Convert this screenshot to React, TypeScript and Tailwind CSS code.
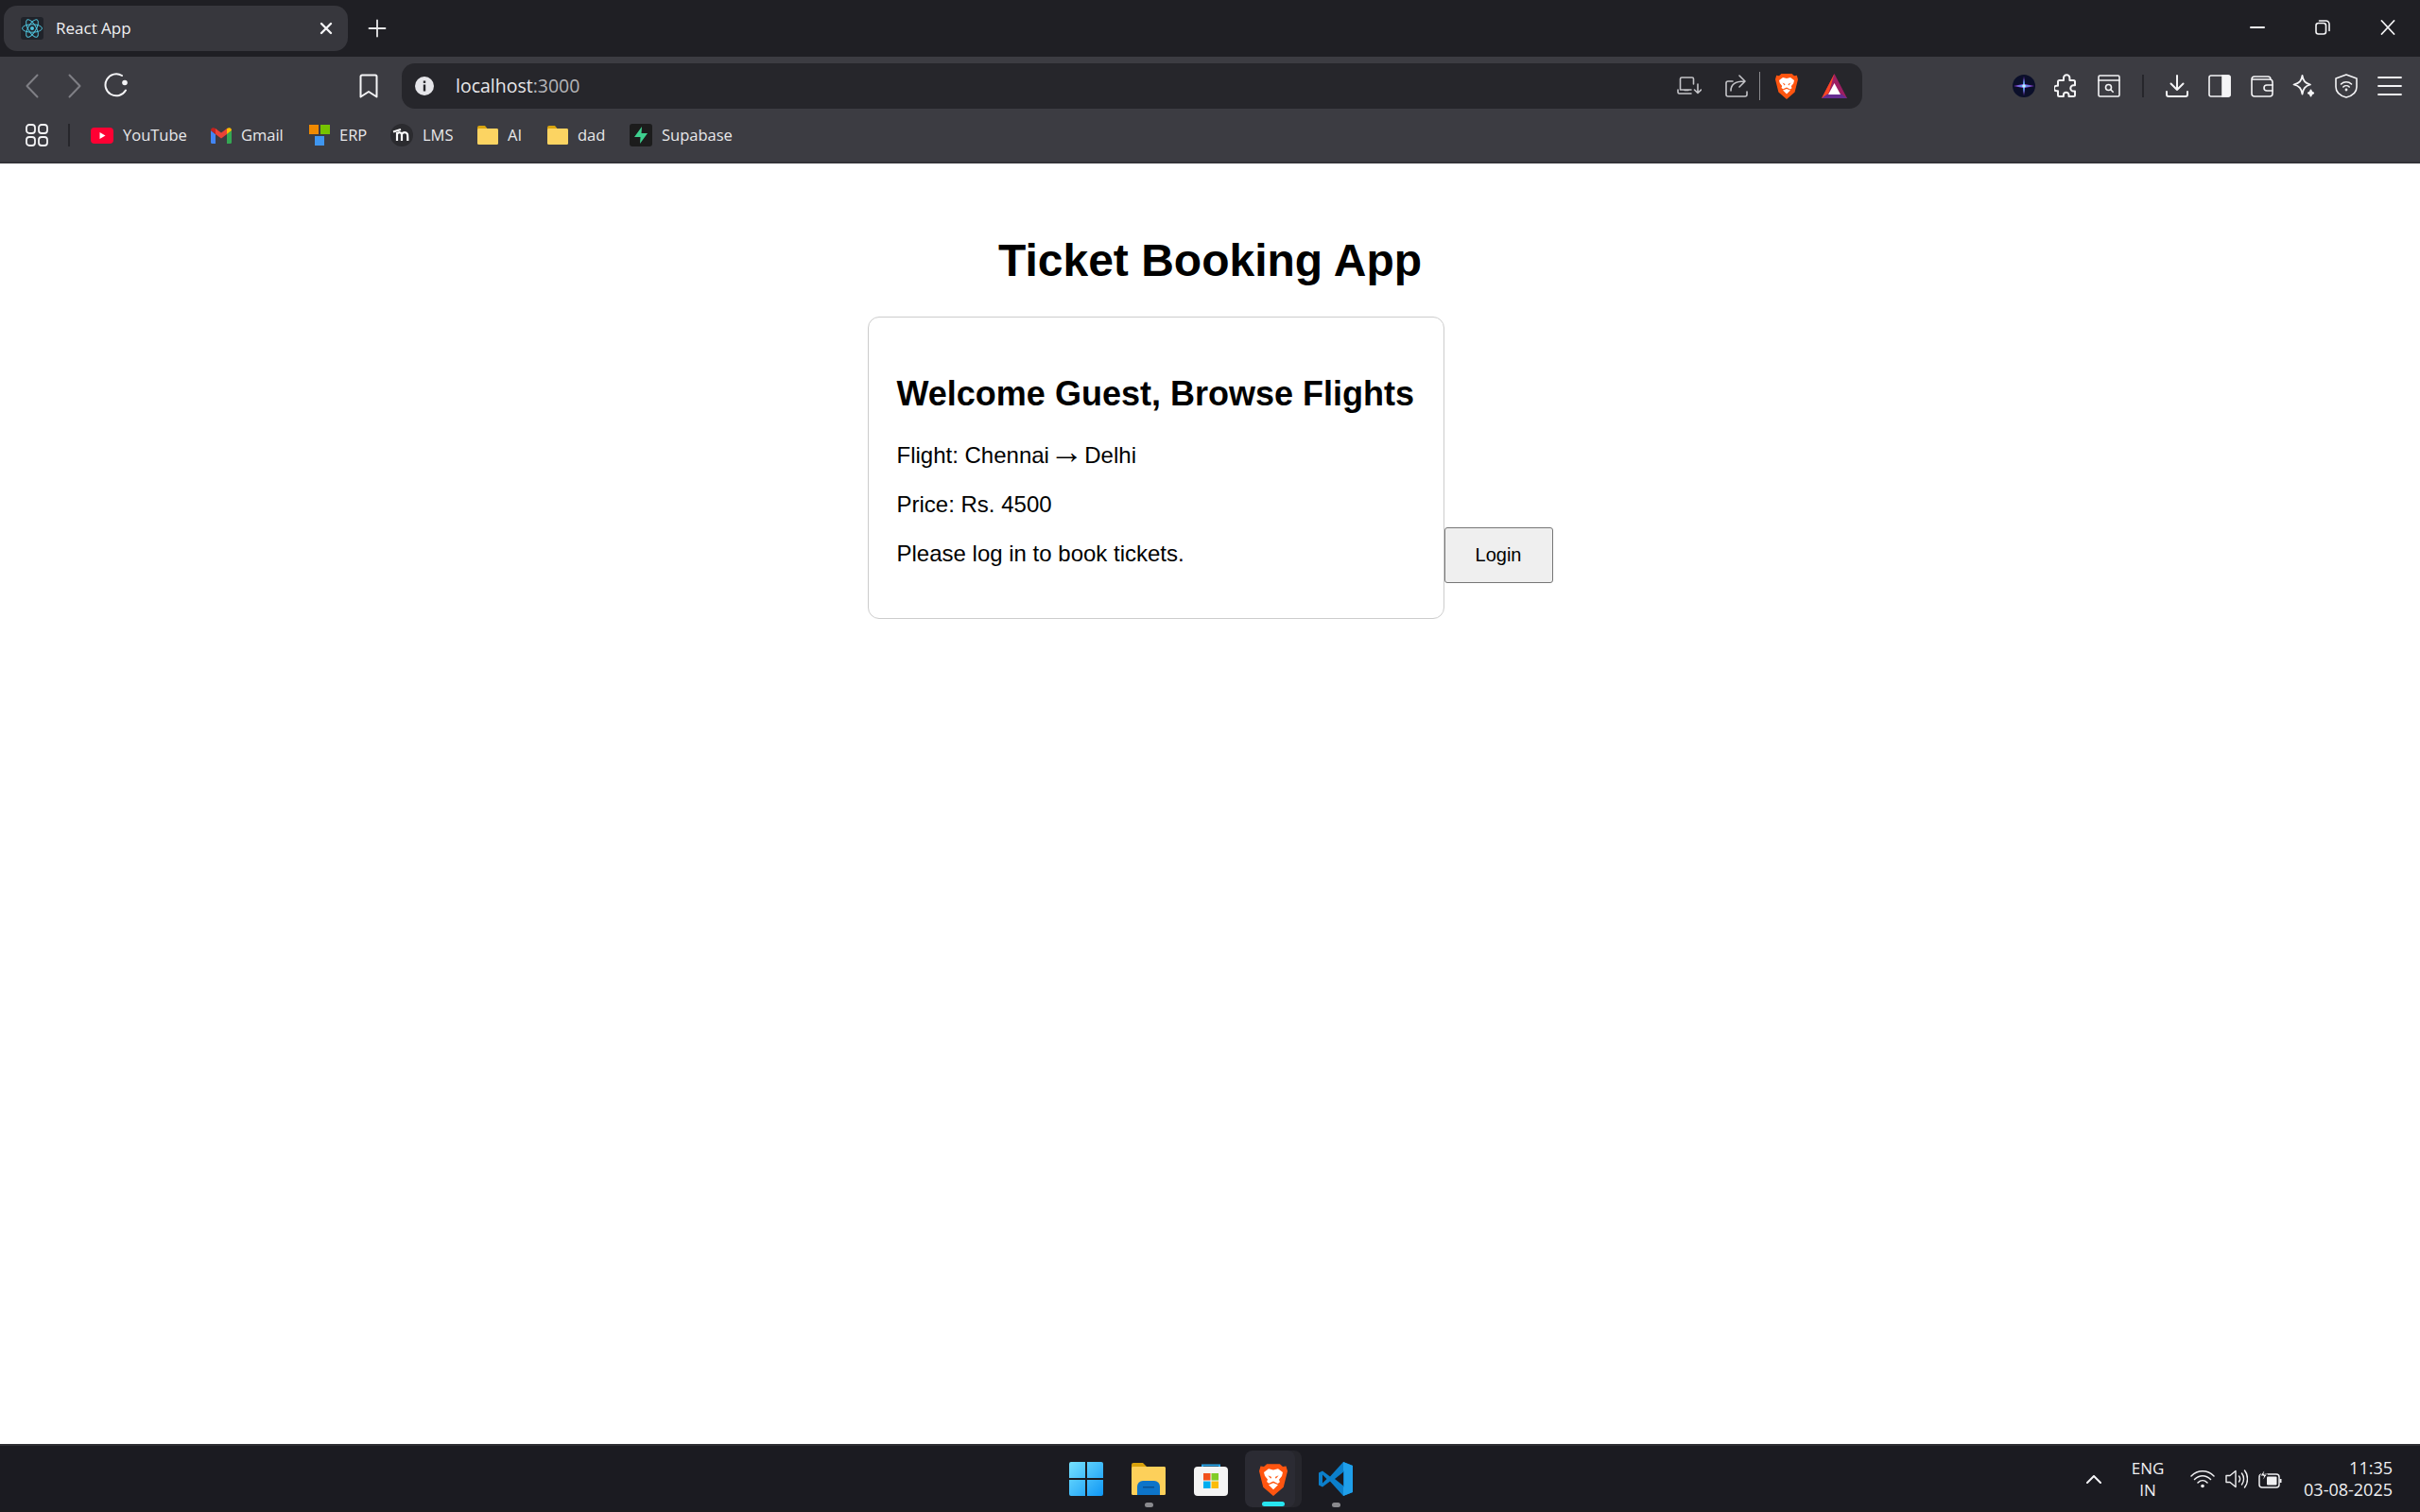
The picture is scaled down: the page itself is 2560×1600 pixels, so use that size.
import { ReactNode } from "react";

const uiFont = "font-['Open_Sans','Noto_Sans',sans-serif]";

function Line({ w = 24, h = 24, vb = "0 0 24 24", sw = 2, color = "#f4f4f6", children }: { w?: number; h?: number; vb?: string; sw?: number; color?: string; children: ReactNode }) {
  return (
    <svg width={w} height={h} viewBox={vb} fill="none" stroke={color} strokeWidth={sw} strokeLinecap="round" strokeLinejoin="round">
      {children}
    </svg>
  );
}

function ReactLogo() {
  return (
    <svg width="24" height="24" viewBox="0 0 24 24" fill="none" stroke="#4fc3dc" strokeWidth="1">
      <rect width="24" height="24" rx="3" fill="#20232a" stroke="none" />
      <circle cx="12" cy="12" r="2" fill="#4fc3dc" stroke="none" />
      <ellipse cx="12" cy="12" rx="10.5" ry="4.2" />
      <ellipse cx="12" cy="12" rx="10.5" ry="4.2" transform="rotate(60 12 12)" />
      <ellipse cx="12" cy="12" rx="10.5" ry="4.2" transform="rotate(120 12 12)" />
    </svg>
  );
}

function BraveLogo({ w, h }: { w: number; h: number }) {
  return (
    <svg width={w} height={h} viewBox="0 0 24 28">
      <path d="M6.5 1h11L20 3.2l2.8-.4L24 7l-1 4-2.4 9.5L12 28 3.4 20.5 1 11 0 7l1.2-4.2 2.8.4z" fill="#ff5510" />
      <path d="M4 8 8 5l4 1 4-1 4 3-.8 3.200-2.400 3 .7 2-1.700 1.300L12 15.500l-3.800 1.800L6.500 16l.7-2-2.400-3z" fill="#fff" />
      <path d="M8 18.500 12 17l4 1.500L12 22.500z" fill="#fff" />
      <path d="M7.500 10.500 10.500 12l-.7 1.400zM16.500 10.500 13.500 12l.7 1.400z" fill="#ff5510" />
    </svg>
  );
}

function BatLogo() {
  return (
    <svg width="27" height="26" viewBox="0 0 27 26">
      <path d="M13.5 0 0 26h27z" fill="#9e1f63" />
      <path d="M13.5 0 0 26l7-4z" fill="#ff4724" />
      <path d="M0 26h27l-6-4.500H6z" fill="#662d91" />
      <path d="M13.500 10 7 22h13z" fill="#fff" />
    </svg>
  );
}

function AuraLogo() {
  return (
    <svg width="24" height="24" viewBox="0 0 24 24">
      <circle cx="12" cy="12" r="12" fill="#0b0f2a" />
      <path d="M12 1.500 13 10l10 2-10 2-1 8.500L11 14 1 12l10-2z" fill="#8a3fd0" />
      <path d="M12 4l1 7 7 1-7 1-1 7-1-7-7-1 7-1z" fill="#4fb4f0" />
      <circle cx="12" cy="12" r="1.800" fill="#c9eaff" />
    </svg>
  );
}

function YouTubeLogo() {
  return (
    <svg width="24" height="17" viewBox="0 0 24 17">
      <rect width="24" height="17" rx="4" fill="#ff0033" />
      <path d="M9.500 5v7l6-3.500z" fill="#fff" />
    </svg>
  );
}

function GmailLogo() {
  return (
    <svg width="22" height="17" viewBox="0 0 22 17">
      <path d="M0 3v12.500A1.500 1.500 0 0 0 1.500 17H5V7z" fill="#4285f4" />
      <path d="M17 7v10h3.500a1.500 1.500 0 0 0 1.500-1.500V3z" fill="#34a853" />
      <path d="M5 7 11 11.500 17 7V1L11 5.500 5 1z" fill="#ea4335" />
      <path d="M0 3 5 7V1L3 .3C1.500-.3 0 1 0 3z" fill="#c5221f" />
      <path d="M22 3l-5 4V1l2-.7C20.500-.3 22 1 22 3z" fill="#fbbc04" />
    </svg>
  );
}

function ErpLogo() {
  return (
    <svg width="22" height="22" viewBox="0 0 22 22">
      <rect width="10" height="10" fill="#f08a00" />
      <rect x="12" width="10" height="10" fill="#76c400" />
      <rect x="6" y="12" width="10" height="10" fill="#3f96f0" />
    </svg>
  );
}

function MoodleLogo() {
  return (
    <svg width="24" height="24" viewBox="0 0 24 24" fill="none">
      <circle cx="12" cy="12" r="12" fill="#2b2b2f" />
      <path d="M3 8.500 11 6M7 9v9M12 9.500V18M12 11c1.500-2.500 5-2.500 6 0 .3 1 .3 2 .3 7M7 11c1.500-2.500 4-2.500 5 0" stroke="#fff" strokeWidth="2.200" />
    </svg>
  );
}

function FolderLogo({ w = 22, h = 20 }: { w?: number; h?: number }) {
  return (
    <svg width={w} height={h} viewBox="0 0 22 20">
      <path d="M0 2a2 2 0 0 1 2-2h6l2.500 3H20a2 2 0 0 1 2 2v2H0z" fill="#d9a50f" />
      <rect y="3" width="22" height="17" rx="1.500" fill="#fcd462" />
    </svg>
  );
}

function SupabaseLogo() {
  return (
    <svg width="24" height="24" viewBox="0 0 24 24">
      <rect width="24" height="24" rx="3" fill="#1c1c1c" />
      <path d="M13 3 5 14h6.500L11 21l8-11h-6.500z" fill="#3ecf8e" />
    </svg>
  );
}

function StoreLogo() {
  return (
    <svg width="36" height="36" viewBox="0 0 36 36" fill="none">
      <path d="M9 10V3.500h18V10" stroke="#2aa5e8" strokeWidth="2" />
      <rect y="5" width="36" height="31" rx="4" fill="#f4f4f4" />
      <rect x="10" y="12" width="7.500" height="7.500" fill="#f1511b" />
      <rect x="18.500" y="12" width="7.500" height="7.500" fill="#80cc28" />
      <rect x="10" y="20.500" width="7.500" height="7.500" fill="#00adef" />
      <rect x="18.500" y="20.500" width="7.500" height="7.500" fill="#fbbc09" />
    </svg>
  );
}

function VsCodeLogo() {
  return (
    <svg width="36" height="36" viewBox="0 0 36 36">
      <path d="M26 0 12 15.500 4 9.500 0 11.500v13l4 2 8-6L26 36l10-4V4zM27 10v16l-10-8zM4 13.500 8.500 18 4 22.500z" fill="#0b7fcb" />
      <path d="M26 0l10 4v28l-10 4z" fill="#1f9fea" />
      <path d="M27 10v16l-1 .8V9.200z" fill="#0b7fcb" />
    </svg>
  );
}

function WindowsLogo() {
  return (
    <svg width="36" height="36" viewBox="0 0 36 36">
      <defs>
        <linearGradient id="win" x1="0" y1="0" x2="1" y2="1">
          <stop offset="0" stopColor="#76e2ff" />
          <stop offset="1" stopColor="#0f97f5" />
        </linearGradient>
      </defs>
      <path d="M2 0h15v17H0V2a2 2 0 0 1 2-2zM19 0h15a2 2 0 0 1 2 2v15H19zM0 19h17v17H2a2 2 0 0 1-2-2zM19 19h17v15a2 2 0 0 1-2 2H19z" fill="url(#win)" />
    </svg>
  );
}

function ExplorerLogo() {
  return (
    <svg width="36" height="34" viewBox="0 0 36 34">
      <path d="M0 2a2 2 0 0 1 2-2h10l4 4h18a2 2 0 0 1 2 2v4H0z" fill="#d9a20c" />
      <rect y="4" width="36" height="30" rx="1.500" fill="#fdd05a" />
      <path d="M6 34V25a6 6 0 0 1 6-6h12a6 6 0 0 1 6 6v9z" fill="#0d74c9" />
      <rect x="12" y="25" width="12" height="1.500" fill="#0a4f8f" />
    </svg>
  );
}

const bookmarks = [
  { label: "YouTube", width: "w-[127px]", icon: <YouTubeLogo /> },
  { label: "Gmail", width: "w-[104px]", icon: <GmailLogo /> },
  { label: "ERP", width: "w-[86px]", icon: <ErpLogo /> },
  { label: "LMS", width: "w-[92px]", icon: <MoodleLogo /> },
  { label: "AI", width: "w-[74px]", icon: <FolderLogo /> },
  { label: "dad", width: "w-[87px]", icon: <FolderLogo /> },
  { label: "Supabase", width: "w-[120px]", icon: <SupabaseLogo /> },
];

function TabStrip() {
  return (
    <div className="flex h-[60px] items-start bg-[#1f1f24] pl-[4px] text-[#f0f0f2]">
      <div className="mt-[6px] flex h-[48px] w-[364px] items-center rounded-[14px] bg-[#37373d] pl-[18px]">
        <ReactLogo />
        <span className="ml-[13px] text-[17px]">React App</span>
        <div className="ml-auto mr-[16px] flex">
          <Line w={14} h={14} vb="0 0 14 14" sw={2.400}>
            <path d="M2 2l10 10M12 2 2 12" />
          </Line>
        </div>
      </div>
      <div className="ml-[21px] mt-[20px] flex">
        <Line w={20} h={20} vb="0 0 20 20" sw={1.800} color="#e8e8ea">
          <path d="M10 1.500v17M1.500 10h17" />
        </Line>
      </div>
      <div className="ml-auto flex h-[58px] items-center">
        <div className="flex w-[68px] justify-center">
          <Line w={16} h={4} vb="0 0 16 4" sw={2}>
            <path d="M1 2h14" />
          </Line>
        </div>
        <div className="flex w-[70px] justify-center">
          <Line w={16} h={16} vb="0 0 16 16" sw={1.600}>
            <rect x="1" y="3.500" width="10.500" height="11.500" rx="2.500" />
            <path d="M4.500 1h7A3.500 3.500 0 0 1 15 4.500v7" />
          </Line>
        </div>
        <div className="flex w-[68px] justify-center">
          <Line w={16} h={16} vb="0 0 16 16" sw={1.800}>
            <path d="M1.500 1l13 14M14.500 1l-13 14" />
          </Line>
        </div>
      </div>
    </div>
  );
}

function Toolbar() {
  return (
    <div className="flex h-[60px] items-center bg-[#3c3c42] pl-[11px] pt-[2px]">
      <div className="flex w-[45px] justify-center">
        <Line w={14} h={26} vb="0 0 14 26" sw={2} color="#7f7f85">
          <path d="M12.500 1.500 1.500 13l11 11.500" />
        </Line>
      </div>
      <div className="flex w-[45px] justify-center">
        <Line w={14} h={26} vb="0 0 14 26" sw={2} color="#7f7f85">
          <path d="M1.500 1.500 12.500 13l-11 11.500" />
        </Line>
      </div>
      <div className="flex w-[44px] justify-center pb-[2px]">
        <svg width="26" height="26" viewBox="0 0 26 26" fill="none" stroke="#f4f4f6" strokeWidth="2">
          <path d="M23 18.500A11.500 11.500 0 1 1 19 3" strokeLinecap="round" />
          <circle cx="22" cy="10.500" r="2.800" fill="#f4f4f6" stroke="none" />
        </svg>
      </div>
      <div className="flex w-[280px] justify-end pr-[25px]">
        <Line w={20} h={26} vb="0 0 20 26" sw={2}>
          <path d="M3 1.500h14A1.500 1.500 0 0 1 18.500 3v21.500L10 19l-8.500 5.500V3A1.500 1.500 0 0 1 3 1.500z" />
        </Line>
      </div>
      <div className="flex h-[48px] w-[1545px] items-center rounded-[14px] bg-[#26262b] pl-[14px] pr-[5px]">
        <svg width="20" height="20" viewBox="0 0 20 20">
          <circle cx="10" cy="10" r="10" fill="#e6e6ea" />
          <rect x="8.800" y="8.500" width="2.400" height="7" fill="#26262b" />
          <rect x="8.800" y="4.500" width="2.400" height="2.400" fill="#26262b" />
        </svg>
        <span className="ml-[23px] text-[19.500px] text-[#e8e8ea]">
          localhost<span className="text-[#b4b4b8]">:3000</span>
        </span>
        <div className="ml-auto flex w-[50px] justify-center">
          <Line w={26} h={20} vb="0 0 26 20" sw={1.600} color="#c4c4c8">
            <path d="M15 14H3.500V2.500A1.500 1.500 0 0 1 5 1h11a1.500 1.500 0 0 1 1.500 1.500V8M1 14v2.500A1.500 1.500 0 0 0 2.500 18H15M8 14.500h4M22 8v9M18.500 14l3.500 3.500 3.500-3.500" />
          </Line>
        </div>
        <div className="flex w-[49px] justify-center">
          <Line w={24} h={24} vb="0 0 24 24" sw={1.600} color="#c4c4c8">
            <path d="M8 7H3a2 2 0 0 0-2 2v12a2 2 0 0 0 2 2h18a2 2 0 0 0 2-2v-3M6 17c0-7 5-10 14-10M15 1l6 6-6 6" />
          </Line>
        </div>
        <div className="h-[30px] w-[1px] bg-[#8a8a8e]" />
        <div className="ml-[3px] flex w-[50px] justify-center">
          <BraveLogo w={24} h={28} />
        </div>
        <div className="flex w-[50px] justify-center">
          <BatLogo />
        </div>
      </div>
      <div className="ml-[149px] flex w-[44px] justify-center">
        <AuraLogo />
      </div>
      <div className="flex w-[46px] justify-center">
        <Line w={26} h={26} vb="0 0 26 26" sw={2}>
          <path d="M10 4.500a3.200 3.200 0 0 1 6.400 0V7h4.100A1.500 1.500 0 0 1 22 8.500v3.700h-1.500a3.200 3.200 0 0 0 0 6.400H22v3.900A1.500 1.500 0 0 1 20.500 24h-5v-1.500a2.800 2.800 0 0 0-5.600 0V24H5.500A1.500 1.500 0 0 1 4 22.500v-4.300H2.600a2.700 2.700 0 0 1 0-5.400H4V8.500A1.500 1.500 0 0 1 5.500 7H10z" />
        </Line>
      </div>
      <div className="flex w-[44px] justify-center">
        <Line w={24} h={24} vb="0 0 24 24" sw={1.600}>
          <rect x="1" y="1" width="22" height="22" rx="1.500" />
          <path d="M1 6h22" />
          <circle cx="11.500" cy="13.500" r="3" />
          <path d="M14 16l2.200 2.200" />
        </Line>
      </div>
      <div className="flex w-[28px] justify-center">
        <div className="h-[24px] w-[2px] bg-[#26262b]" />
      </div>
      <div className="flex w-[44px] justify-center">
        <Line w={24} h={24} vb="0 0 24 24" sw={2}>
          <path d="M12 1v15M5.500 9.500 12 16l6.500-6.500M1 18v3a2 2 0 0 0 2 2h18a2 2 0 0 0 2-2v-3" />
        </Line>
      </div>
      <div className="flex w-[46px] justify-center">
        <svg width="24" height="24" viewBox="0 0 24 24" fill="none" stroke="#f4f4f6" strokeWidth="1.600">
          <rect x="1" y="1" width="22" height="22" rx="2" />
          <path d="M15 1h6a2 2 0 0 1 2 2v18a2 2 0 0 1-2 2h-6z" fill="#f4f4f6" />
        </svg>
      </div>
      <div className="flex w-[44px] justify-center">
        <Line w={24} h={24} vb="0 0 24 24" sw={1.600}>
          <path d="M1 5a3 3 0 0 1 3-3h14a3 3 0 0 1 3 3M1 5v15a3 3 0 0 0 3 3h16a3 3 0 0 0 3-3V8a3 3 0 0 0-3-3H1z" />
          <path d="M23 11h-6a3 3 0 0 0 0 6h6" />
        </Line>
      </div>
      <div className="flex w-[44px] justify-center">
        <Line w={24} h={26} vb="0 0 24 26" sw={1.800}>
          <path d="M10.500 2c1 6 3 8 8.500 9.500-5.500 1.500-7.500 4-8.500 10C9.500 15.500 7.500 13 1.500 11.500 7.500 10 9.500 8 10.500 2z" />
          <path d="M19.500 17.500c.3 2 1 2.700 2.700 3-1.700.3-2.400 1-2.700 3-.3-2-1-2.700-2.700-3 1.700-.3 2.400-1 2.700-3z" fill="#f4f4f6" />
        </Line>
      </div>
      <div className="flex w-[46px] justify-center">
        <Line w={24} h={26} vb="0 0 24 26" sw={1.600}>
          <path d="M12 1 23 5v9c0 6-5 9.500-11 11C6 23.500 1 20 1 14V5z" />
          <path d="M6.500 11c3-3 8-3 11 0M8.800 14c1.800-1.700 4.600-1.700 6.400 0" />
          <circle cx="12" cy="17" r=".6" />
        </Line>
      </div>
      <div className="flex w-[46px] justify-center">
        <Line w={26} h={22} vb="0 0 26 22" sw={1.800}>
          <path d="M1 2h24M1 11h24M1 20h24" />
        </Line>
      </div>
    </div>
  );
}

function BookmarksBar() {
  return (
    <div className="flex h-[53px] items-center border-b-[2px] border-[#333338] bg-[#3c3c42] pb-[5px] pl-[27px] text-[16.500px] text-[#e8e8ea]">
      <Line w={24} h={24} vb="0 0 24 24" sw={1.800}>
        <rect x="1" y="1" width="9" height="9" rx="3" />
        <rect x="14" y="1" width="9" height="9" rx="3" />
        <rect x="1" y="14" width="9" height="9" rx="3" />
        <rect x="14" y="14" width="9" height="9" rx="3" />
      </Line>
      <div className="ml-[21px] h-[24px] w-[2px] bg-[#26262b]" />
      <div className="ml-[22px] flex items-center">
        {bookmarks.map((b) => (
          <div key={b.label} className={`flex items-center gap-[10px] ${b.width}`}>
            {b.icon}
            <span>{b.label}</span>
          </div>
        ))}
      </div>
    </div>
  );
}

function Page() {
  return (
    <main className="min-h-0 flex-1 bg-white text-center font-['Liberation_Sans',Arial,sans-serif] text-[24px] text-black">
      <h1 className="pt-[73px] text-[48px] font-bold leading-[59px]">Ticket Booking App</h1>
      <div className="mt-[30px]">
        <div className="inline-block w-[610px] rounded-[12px] border-[1.500px] border-[#cccccc] pb-[54px] pl-[30px] pt-[59px] text-left">
          <h2 className="text-[36px] font-bold leading-[44px]">Welcome Guest, Browse Flights</h2>
          <p className="mt-[28px] leading-[29px]">
            Flight: Chennai{" "}
            <span className="inline-flex w-[24px] justify-center text-[36px] leading-[0]">→</span>{" "}
            Delhi
          </p>
          <p className="mt-[23px] leading-[29px]">Price: Rs. 4500</p>
          <p className="mt-[23px] leading-[29px]">Please log in to book tickets.</p>
        </div>
        <button className="inline-block h-[59px] w-[115px] rounded-[3px] border-[1.500px] border-[#767676] bg-[#efefef] text-[20px] text-black">
          Login
        </button>
      </div>
    </main>
  );
}

function Taskbar() {
  return (
    <footer className="flex h-[72px] items-center border-t-[2px] border-[#2e2e33] bg-[#1b1b21] pl-[1131px] text-[#f0f0f2]">
      <div className="flex w-[66px]">
        <WindowsLogo />
      </div>
      <div className="relative flex w-[66px]">
        <ExplorerLogo />
        <div className="absolute left-[14px] top-[42px] h-[5px] w-[9px] rounded-full bg-[#8a8a8e]" />
      </div>
      <div className="flex w-[54px]">
        <StoreLogo />
      </div>
      <div className="relative flex h-[60px] w-[53px] items-center justify-center rounded-[8px] bg-[#2b2b33] pl-[7px] shadow-[7px_0_0_0_#26262c]">
        <BraveLogo w={30} h={35} />
        <div className="absolute bottom-[1px] left-[18px] h-[5px] w-[24px] rounded-full bg-[#27e4f0]" />
      </div>
      <div className="relative ml-[25px] flex w-[36px]">
        <VsCodeLogo />
        <div className="absolute left-[14px] top-[43px] h-[5px] w-[9px] rounded-full bg-[#8a8a8e]" />
      </div>
      <div className="ml-[773px] flex w-[22px] justify-center">
        <Line w={16} h={9} vb="0 0 16 9" sw={2}>
          <path d="M1 8l7-7 7 7" />
        </Line>
      </div>
      <div className="ml-[21px] w-[50px] text-center text-[17px] leading-[23px]">
        <div>ENG</div>
        <div>IN</div>
      </div>
      <div className="ml-[18px] flex w-[30px] justify-center">
        <svg width="26" height="20" viewBox="0 0 26 20" fill="none" stroke="#f0f0f2" strokeWidth="1.500" strokeLinecap="round">
          <path d="M1 7c7-7 17-7 24 0M4.500 10.500c5-5 12-5 17 0M8 14c3-3 7-3 10 0" />
          <circle cx="13" cy="17.500" r="1.800" fill="#f0f0f2" stroke="none" />
        </svg>
      </div>
      <div className="ml-[6px] flex w-[30px] justify-center">
        <Line w={24} h={22} vb="0 0 24 22" sw={1.400} color="#f0f0f2">
          <path d="M1 7.500v7h4l6 5V2.500l-6 5zM14.500 8c1.500 2 1.500 4 0 6M17.500 5c2.700 3.500 2.700 8.500 0 12M20.500 2c4 5 4 13 0 18" />
        </Line>
      </div>
      <div className="ml-[6px] flex w-[30px] justify-center">
        <svg width="26" height="20" viewBox="0 0 26 20" fill="none" stroke="#f0f0f2" strokeWidth="1.500">
          <rect x="1" y="5" width="21" height="14" rx="3" />
          <rect x="9" y="7.500" width="10.500" height="9" rx="1" fill="#f0f0f2" stroke="none" />
          <path d="M23.500 10v4" strokeWidth="2" />
          <path d="M6.500 0 2 7h3.500L4.500 12 9.500 5H6z" fill="#f0f0f2" stroke="#1b1b21" strokeWidth="1" />
        </svg>
      </div>
      <div className="ml-auto mr-[29px] text-right text-[18px] leading-[23px]">
        <div>11:35</div>
        <div>03-08-2025</div>
      </div>
    </footer>
  );
}

export default function App() {
  return (
    <div className={`flex h-screen w-full flex-col overflow-hidden ${uiFont}`}>
      <TabStrip />
      <Toolbar />
      <BookmarksBar />
      <Page />
      <Taskbar />
    </div>
  );
}
